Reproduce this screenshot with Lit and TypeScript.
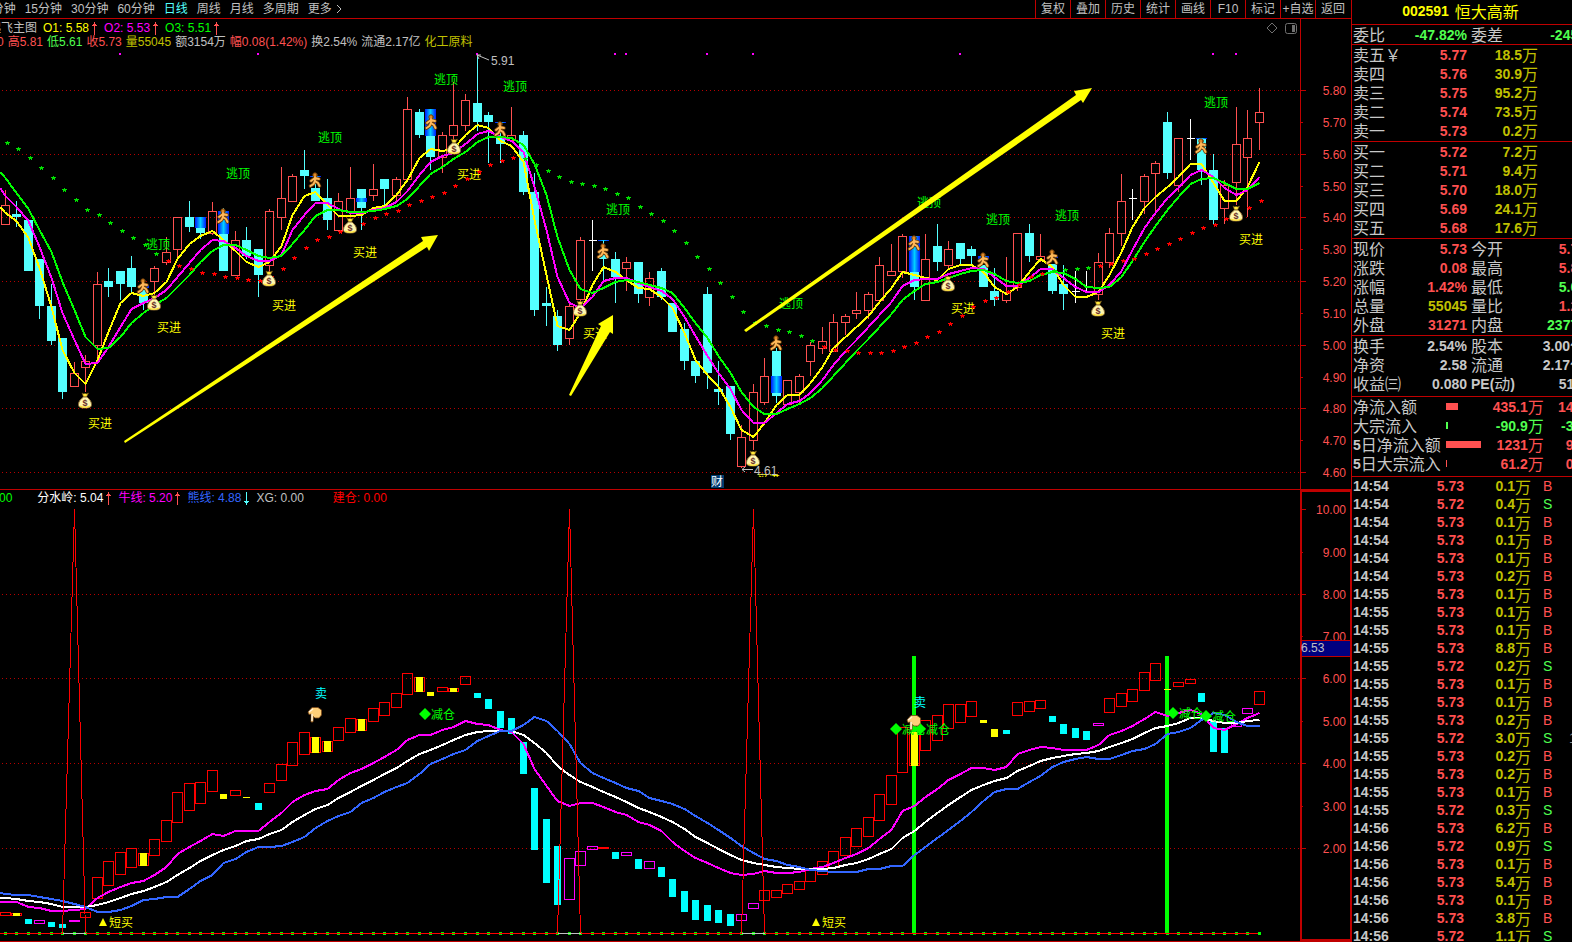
import { LitElement, html, svg, css } from "lit";
import { customElement, property } from "lit/decorators.js";
import { classMap } from "lit/directives/class-map.js";

// Horizontal centre of the bar with the given index.
const cx = (i: number) => Math.floor(5.3 + 11.505 * i) + 0.5;

// Candles: kind (R rising, C falling, W doji), high, body top, body bottom, low.
type Candle = [string, number, number, number, number];
const candles: Candle[] = [
  ["R",190,205,225,225],["C",201,214,217,227],["C",220,220,271,271],["C",259,259,306,319],["C",284,306,341,345],
  ["C",338,338,392,399],["R",362,373,387,387],["R",355,361,368,392],["R",272,284,346,358],["C",268,281,287,297],
  ["C",271,271,284,300],["C",256,268,287,292],["C",285,290,303,310],["R",266,268,282,295],["R",237,252,263,265],
  ["R",217,217,250,257],["C",201,217,227,232],["C",217,217,233,239],["R",202,211,234,235],["C",208,211,271,271],
  ["R",231,240,276,276],["C",227,240,256,259],["C",249,249,275,297],["R",209,211,266,275],["R",167,198,218,230],
  ["R",174,176,202,202],["C",150,170,176,189],["C",176,188,201,201],["C",179,198,220,230],["R",193,201,231,231],
  ["R",167,198,212,217],["C",189,189,208,230],["R",164,189,196,201],["C",179,179,189,205],["R",177,179,196,201],
  ["R",97,109,180,180],["C",109,112,135,138],["C",109,120,157,170],["R",132,135,158,173],["R",82,125,136,140],
  ["R",94,100,126,131],["C",54,103,122,131],["C",112,115,122,163],["C",122,136,144,163],["R",107,135,141,141],
  ["C",131,135,192,195],["C",173,192,310,316],["C",287,303,306,326],["C",310,316,345,351],["R",303,306,339,345],
  ["R",237,240,300,305],["W",220,240,241,271],["C",240,253,259,280],["C",252,259,277,303],["R",257,262,269,291],
  ["C",262,262,294,303],["R",272,278,298,306],["C",268,271,297,300],["C",303,303,332,332],["C",323,329,361,370],
  ["C",361,361,376,383],["C",287,294,373,389],["C",361,389,392,405],["C",386,386,434,440],["R",425,437,467,468],
  ["R",384,392,441,450],["R",358,376,403,405],["C",348,351,396,403],["R",380,380,405,405],["R",374,376,393,403],
  ["R",342,345,362,376],["R",327,341,349,354],["R",314,322,352,352],["R",314,316,323,335],["R",292,310,314,319],
  ["R",292,294,311,319],["R",257,265,301,301],["R",244,271,276,276],["R",234,236,272,278],["C",236,272,287,300],
  ["R",234,259,301,301],["C",224,246,262,271],["R",241,249,266,268],["C",243,243,259,264],["C",246,249,256,264],
  ["C",265,265,287,287],["C",268,291,300,306],["R",257,292,301,303],["R",233,233,288,291],["C",224,233,256,262],
  ["R",234,256,260,262],["C",264,264,291,294],["C",265,284,294,310],["W",271,291,292,303],["W",271,291,292,293],
  ["R",253,262,295,300],["R",228,233,263,268],["R",174,201,234,246],["W",189,198,199,220],["R",174,176,202,214],
  ["R",161,163,174,211],["C",112,122,173,179],["R",138,138,186,192],["W",119,138,139,160],["C",138,139,170,185],
  ["C",154,170,220,224],["R",180,185,209,224],["R",107,144,183,205],["R",110,138,158,217],["R",88,112,123,150],
];

const ma1 = [213,221,238,268,307,350,373,384,360,332,303,293,296,293,282,259,244,236,231,240,251,262,267,262,246,215,196,192,205,216,216,215,208,206,195,180,158,149,151,149,135,125,128,141,146,162,220,275,326,330,313,285,267,272,280,288,289,297,308,333,360,375,387,407,430,437,423,405,395,395,383,367,348,337,327,316,302,288,272,275,278,280,269,265,265,272,287,294,287,272,259,267,285,297,297,292,275,252,227,208,197,187,177,164,164,183,201,201,187,162];
const ma2 = [196,207,221,247,278,313,340,364,363,347,327,309,303,298,290,277,263,250,240,241,248,256,261,261,255,230,215,203,203,209,213,213,210,208,202,191,175,162,156,153,144,134,131,137,141,152,187,230,277,303,308,297,281,278,278,283,287,291,299,317,336,356,373,389,410,423,423,413,404,401,393,380,365,351,340,327,315,302,286,280,279,279,274,271,268,269,277,286,286,278,269,269,278,287,292,292,285,271,250,228,213,198,188,175,170,177,188,195,190,177];
const ma3 = [178,193,209,230,252,282,310,337,349,348,337,323,313,305,298,287,275,262,251,245,245,250,256,258,256,244,230,216,210,210,212,212,211,209,206,199,186,174,167,159,152,142,137,137,138,145,164,195,237,270,289,293,288,282,280,282,285,288,293,308,323,338,356,373,392,407,414,414,409,404,398,388,376,363,351,339,327,314,300,291,284,282,278,274,271,270,274,281,283,281,275,272,273,279,287,288,287,277,261,242,226,210,197,184,179,178,183,189,189,183];

// Stop levels, one per bar; the ranges listed in greenStops sit above the price.
const stops = [143,149,158,168,178,190,200,210,215,223,231,238,245,254,261,266,269,273,274,277,278,280,281,277,269,258,248,240,237,232,228,224,218,214,211,205,201,197,193,186,179,172,165,161,158,159,165,171,177,182,184,186,189,194,198,207,214,221,231,243,257,269,283,297,312,323,326,330,332,336,341,347,350,351,353,353,353,351,347,343,337,332,324,316,307,301,298,292,285,277,274,271,270,269,268,266,264,261,259,254,249,244,239,233,228,225,219,213,208,201];
const greenStops = [[0, 13], [45, 70], [91, 94]];
const isGreenStop = (i: number) => greenStops.some(([a, b]) => i >= a && i <= b);

// Bar index, top, bottom of the shaded signal zone.
const zones = [[12,285,288],[17,217,228],[19,211,234],[27,176,177],[31,198,202],[37,109,136],[43,122,123],[52,240,241],[67,376,393],[79,236,272],[85,256,259],[91,256,258],[104,138,139]];
const bags = [[85,401],[154,303],[269,279],[350,226],[454,147],[580,309],[753,459],[948,284],[1098,309],[1236,214]];
const runners = [[431,122],[315,180],[223,216],[143,286],[500,129],[603,251],[776,343],[914,243],[983,260],[1052,257],[1201,146]];
const buys = [[88,423],[157,327],[272,305],[353,252],[457,174],[583,333],[951,308],[1101,333],[1239,239]];
const exits = [[434,79],[318,137],[226,173],[146,244],[503,86],[606,209],[779,303],[917,202],[986,219],[1055,215],[1204,102]];
const dots = [120,258,477,615,626,707,753,960,1213,1236];
const arrows = [
  "124,441 423,241 421,237 438,235 429,251 427,247 125,443",
  "569,395 601,326 598,324 613,315 613,334 610,332 571,396",
  "744,330 1076,95 1074,91 1092,88 1083,103 1081,100 746,332",
];

// Indicator bars: kind (r/m outlined, c/y filled, Y filled inside an outline), top, bottom.
type Bar = [string, number, number];
const bars: Bar[] = [
  ["r",912,915],["Y",913,915],["c",919,924],["m",920,923],["c",922,927],["c",924,928],["m",920,921],["r",912,917],["r",877,898],["r",861,885],
  ["r",852,874],["r",848,867],["Y",853,865],["r",839,855],["r",820,841],["r",792,822],["r",783,810],["r",782,803],["r",770,791],["y",794,799],
  ["r",790,795],["y",797,798],["c",803,810],["r",783,792],["r",764,780],["r",742,765],["r",732,754],["Y",737,752],["Y",741,751],["r",727,740],
  ["r",718,732],["Y",719,730],["r",708,721],["r",702,715],["r",693,707],["r",673,694],["Y",677,691],["y",692,696],["r",687,691],["Y",688,691],
  ["r",676,684],["c",693,698],["c",699,709],["c",711,728],["c",718,734],["c",742,774],["c",788,850],["c",819,883],["c",846,905],["m",858,899],
  ["m",851,865],["m",846,849],["r",847,848],["c",852,859],["m",852,855],["c",859,869],["m",861,868],["c",867,877],["c",879,897],["c",891,912],
  ["c",900,920],["c",905,921],["c",910,923],["c",914,926],["m",914,920],["m",903,908],["r",890,900],["r",890,897],["r",884,893],["r",881,889],
  ["r",870,881],["r",861,874],["r",851,867],["r",837,855],["r",828,846],["r",817,836],["r",794,820],["r",775,804],["r",727,772],["Y",732,765],
  ["r",720,750],["r",715,740],["r",704,728],["r",704,722],["r",701,716],["y",720,723],["y",729,737],["c",730,734],["r",702,715],["r",701,711],
  ["r",700,708],["c",716,722],["c",724,734],["c",728,738],["c",731,740],["m",723,725],["r",698,712],["r",693,706],["r",689,701],["r",672,690],
  ["r",663,680],["y",689,690],["r",682,686],["r",679,683],["c",693,702],["c",721,752],["c",728,753],["m",723,726],["m",708,713],["r",691,704],
];
const bull = [902,902,907,908,911,911,910,909,898,892,887,883,881,875,867,854,847,841,834,836,831,831,831,822,813,802,795,791,789,780,773,769,763,757,750,740,735,735,730,727,721,724,725,730,732,744,769,786,801,806,803,803,807,812,815,822,825,831,842,851,858,863,868,873,875,874,871,873,873,872,869,867,863,858,854,848,839,830,811,806,797,789,780,774,768,768,770,767,754,750,747,748,750,750,750,745,735,731,726,719,712,716,713,710,714,728,730,724,718,713];
const ridge = [898,899,901,902,904,907,907,907,905,902,898,894,891,887,882,875,868,861,855,850,846,841,839,834,830,822,815,809,805,798,792,786,780,774,768,761,754,750,745,740,735,732,731,731,731,735,743,753,766,775,782,787,792,797,802,808,812,817,822,829,837,843,849,855,860,863,865,867,868,869,869,869,868,865,863,859,854,849,838,831,822,813,805,797,790,785,781,778,771,766,761,758,756,754,753,751,747,743,739,733,728,726,723,718,718,721,723,723,721,720];
const bear = [894,895,895,897,899,901,904,907,912,912,910,906,900,899,897,897,889,881,875,863,859,852,847,847,846,842,837,828,821,816,812,803,798,792,787,783,774,764,759,754,750,741,736,731,731,725,717,721,731,744,763,773,778,783,788,791,798,801,804,809,816,823,830,838,846,853,859,861,865,867,870,871,872,872,872,869,869,866,866,855,847,838,830,821,812,801,792,789,789,782,776,767,762,759,757,759,759,755,751,749,744,734,732,728,720,713,715,722,726,726];
const reduces = [[425,714],[896,729],[920,729],[1173,713],[1206,716]];

const path = (ys: number[], start: number) =>
  `0,${start} ` + ys.map((y, i) => `${cx(i)},${y}`).join(" ");

// Five-pixel asterisk whose left edge is x and whose crossbar is row y.
const star = (x: number, y: number) =>
  `M${x + 2} ${y - 0.5} h1 M${x} ${y + 0.5} h5 M${x + 1} ${y + 1.5} h3 M${x + 1} ${y + 2.5} h1 M${x + 3} ${y + 2.5} h1`;

// Splits a string so that digits are bold and hanzi keep the larger regular face.
const mix = (s: string) =>
  (s.match(/[\x20-\x7e]+|[^\x20-\x7e]+/g) ?? []).map((p) =>
    /[\x20-\x7e]/.test(p) ? html`<span class="n">${p}</span>` : p);

const bagIcon = (x: number, y: number) => svg`
  <g transform="translate(${x} ${y})">
    <path d="M-3 -8 L-1 -7 L0 -8 L1 -7 L3.500 -8 L1.500 -4 L-1.500 -4 Z" fill="#ffe838" stroke="#6b4a10" stroke-width=".6"/>
    <path d="M-1.500 -4 H2 C4 -2 6.500 0 6.500 3.500 C6.500 6.500 4 7 0 7 C-4 7 -6.500 6.500 -6.500 3.500 C-6.500 0 -4 -2 -1.500 -4 Z" fill="#fff6b0" stroke="#8a6a30" stroke-width="1"/>
    <path d="M-5 5 C-3 6.500 3 6.500 5 5" fill="none" stroke="#ffe23a" stroke-width="1.500"/>
    <text class="coin" x="0" y="5" text-anchor="middle">$</text>
  </g>`;

const runnerIcon = (x: number, y: number) => svg`
  <g transform="translate(${x} ${y})" stroke-linecap="round" stroke-linejoin="round" fill="none">
    <path d="M0 -3 V1 M0 -2 L-4 1 M0 -2 L4 -1 M0 1 L-1.500 4 L-4.500 6 M0 1 L3 3 L4.500 6" stroke="#6a3a08" stroke-width="3.600"/>
    <circle cx="0" cy="-5" r="2.200" fill="#e08a28" stroke="#6a3a08"/>
    <path d="M0 -3 V1 M0 -2 L-4 1 M0 -2 L4 -1 M0 1 L-1.500 4 L-4.500 6 M0 1 L3 3 L4.500 6" stroke="#ffb95a" stroke-width="1.900"/>
  </g>`;

const handIcon = (x: number, y: number) => svg`
  <g transform="translate(${x} ${y})">
    <path d="M0 5 L4 0.500 H10 L13.500 3 V8 L11 11 H7 L5.500 9.500 L5 15 H3 L3.200 7 L1 7.500 Z" fill="#ffcf78" stroke="#7a4818" stroke-width=".8"/>
    <path d="M1 5 L5 2 M4 7 V14" stroke="#fff4e0" stroke-width="1.400" fill="none"/>
  </g>`;

@customElement("trend-arrow")
class TrendArrow extends LitElement {
  @property({ type: Boolean }) down = false;
  static styles = css`
    :host { display: block; }
    svg { display: block; }
    .up { fill: none; stroke: #ff5050; }
    .down { fill: none; stroke: #54ffff; }
  `;
  render() {
    return html`<svg width="5" height="13" viewBox="0 0 5 13" shape-rendering="crispEdges">
      ${this.down
        ? svg`<path class="down" d="M2.500 0 V13 M0 9.500 H5 M1 10.500 H4"/>`
        : svg`<path class="up" d="M2.500 0 V13 M0 3.500 H5 M1 2.500 H4"/>`}
    </svg>`;
  }
}

const chartStyles = css`
  :host { display: grid; grid-template-columns: minmax(0, 1fr) 51px; font: 12px/14px "Liberation Sans", "Noto Sans CJK SC", sans-serif; }
  svg { display: block; width: 100%; }
  .plot { overflow: hidden; }
  .legend { display: flex; white-space: nowrap; }
  .item { display: flex; align-items: center; gap: 3px; }
  .crisp { shape-rendering: crispEdges; }
  .grid { stroke: #b80000; stroke-dasharray: 1 3; }
  .tick { stroke: #c00000; }
  .label { fill: #ff5050; text-anchor: end; }
  .line { fill: none; stroke-width: 2; }
  .yellow { color: #ffff00; } .magenta { color: #ff00ff; } .green { color: #00ff00; }
  .rise { color: #ff5050; } .fall { color: #50ff50; } .olive { color: #c0c000; }
  .grey { color: #c0c0c0; } .white { color: #ffffff; } .blue { color: #3366ff; } .red { color: #ff0000; }
`;

@customElement("price-chart")
class PriceChart extends LitElement {
  static styles = [chartStyles, css`
    :host { border-bottom: 1px solid #c00000; }
    .main { height: 438px; }
    .scale { height: 470px; }
    .top { display: flex; justify-content: space-between; height: 32px; padding-top: 2px; box-sizing: border-box; }
    .names { gap: 7px; margin-left: -11px; }
    .names .title { margin-right: -1px; }
    .facts { gap: 4px; margin-left: -3px; }
    .tools { display: flex; gap: 5px; align-items: center; height: 14px; padding-right: 2px; }
    .tools button { border: 0; padding: 0; background: none; width: 14px; height: 14px; }
    .tools svg { width: 14px; height: 14px; fill: none; stroke: #707070; }
    .up { fill: none; stroke: #ff5050; }
    .upwick { stroke: #ff5050; }
    .down { fill: #54ffff; }
    .downwick { stroke: #54ffff; }
    .doji { stroke: #fff; }
    .buy { fill: #ffff00; } .exit { fill: #00ff00; }
    .sg { stroke: #00e000; } .sr { stroke: #ff0000; }
    .mark { fill: #ff00ff; }
    .note { fill: #c0c0c0; } .noteline { fill: none; stroke: #c0c0c0; }
    .coin { font: bold 9px "Liberation Sans", sans-serif; fill: #6b3028; }
    .tag { fill: #003a70; } .tagtext { fill: #fff; }
  `];

  render() {
    const names = [["O1: 5.58", "yellow"], ["O2: 5.53", "magenta"], ["O3: 5.51", "green"]];
    const facts = [["0", "rise"], ["高5.81", "rise"], ["低5.61", "fall"], ["收5.73", "rise"], ["量55045", "olive"], ["额3154万", "grey"], ["幅0.08(1.42%)", "rise"], ["换2.54%", "grey"], ["流通2.17亿", "grey"], ["化工原料", "olive"]];
    const levels = [90,122,154,186,217,249,281,313,345,377,408,440,472];
    return html`
      <div class="plot">
        <div class="top">
          <div>
            <div class="legend names">
              <span class="title grey">起飞主图</span>
              ${names.map(([t, c]) => html`<span class="item ${c}">${t}<trend-arrow></trend-arrow></span>`)}
            </div>
            <div class="legend facts">${facts.map(([t, c]) => html`<span class=${c}>${t}</span>`)}</div>
          </div>
          <div class="tools">
            <button aria-label="标注"><svg viewBox="0 0 14 14"><path d="M7 2 L12 7 L7 12 L2 7 Z"/></svg></button>
            <button aria-label="侧栏"><svg viewBox="0 0 14 14"><rect x="1.500" y="2.500" width="11" height="10" rx="2"/><rect x="8" y="4" width="3" height="7" fill="#707070" stroke="none"/></svg></button>
          </div>
        </div>
        <svg class="main" viewBox="0 51 1300 438" preserveAspectRatio="xMaxYMin slice">
          <defs>
            <linearGradient id="zone"><stop offset="0" stop-color="#0018ff"/><stop offset=".2" stop-color="#0060ff"/><stop offset=".5" stop-color="#00d0ff"/><stop offset=".8" stop-color="#0060ff"/><stop offset="1" stop-color="#0018ff"/></linearGradient>
            <clipPath id="floor"><rect x="0" y="474" width="1300" height="3"/></clipPath>
          </defs>
          <g class="crisp">
            ${levels.filter((_, i) => i % 2 === 0).map((y) => svg`<path class="grid" d="M2 ${y + 0.5} H1300"/>`)}
            ${candles.map(([k, hi, top, bot, lo], i) => {
              const x = cx(i);
              if (k === "R") return svg`<path class="upwick" d="M${x} ${hi} V${top} M${x} ${bot} V${lo}"/><rect class="up" x=${x - 4} y=${top + 0.5} width="8" height=${bot - top - 1}/>`;
              if (k === "C") return svg`<path class="downwick" d="M${x} ${hi} V${lo}"/><rect class="down" x=${x - 4.5} y=${top} width="9" height=${bot - top}/>`;
              return svg`<path class="doji" d="M${x} ${hi} V${lo} M${x - 4} ${top + 0.5} H${x + 4}"/>`;
            })}
            ${zones.map(([i, a, b]) => svg`<rect fill="url(#zone)" x=${cx(i) - 5.5} y=${a} width="11" height=${b - a}/>`)}
          </g>
          ${exits.map(([x, y]) => svg`<text class="exit" x=${x} y=${y + 5}>逃顶</text>`)}
          ${buys.map(([x, y]) => svg`<text class="buy" x=${x} y=${y + 5}>买进</text>`)}
          <text class="buy" x="756" y="484" clip-path="url(#floor)">买进</text>
          <g class="crisp">
            <polyline class="line" stroke="#ffff00" points=${path(ma1, 207)} />
            <polyline class="line" stroke="#ff00ff" points=${path(ma2, 188)} />
            <polyline class="line" stroke="#00ff00" points=${path(ma3, 172)} />
            ${stops.map((y, i) => svg`<path class=${isGreenStop(i) ? "sg" : "sr"} d=${star(cx(i) - 0.5, y - 1)}/>`)}
            ${dots.map((x) => svg`<rect class="mark" x=${x - 1} y="53" width="2" height="2"/>`)}
          </g>
          ${runners.map(([x, y]) => runnerIcon(x, y))}
          ${bags.map(([x, y]) => bagIcon(x, y))}
          <path class="noteline" d="M477 55 L489 60 M477 55 l4 0 M477 55 l2 4"/>
          <text class="note" x="491" y="65">5.91</text>
          <path class="noteline" d="M742 469.500 H753 M745 467 L742 469.500 L745 472"/>
          <text class="note" x="754" y="475">4.61</text>
          <rect class="tag" x="711" y="475" width="13" height="13"/>
          <text class="tagtext" x="711" y="486">财</text>
          ${arrows.map((p) => svg`<polygon fill="#ffff00" points=${p}/>`)}
        </svg>
      </div>
      <svg class="scale" viewBox="1300 19 51 470" preserveAspectRatio="xMinYMin meet">
        <path class="tick crisp" d="M1300.500 19 V489"/>
        ${levels.map((y, i) => svg`
          <path class="tick crisp" d="M1301 ${y + 0.5} h${i % 2 ? 2 : 5}"/>
          <text class="label" x="1346" y=${y + 5}>${(5.8 - i / 10).toFixed(2)}</text>`)}
      </svg>`;
  }
}

@customElement("indicator-chart")
class IndicatorChart extends LitElement {
  static styles = [chartStyles, css`
    :host { border-bottom: 1px solid #c00000; }
    .main { height: 435px; }
    .scale { height: 451px; }
    .legend { height: 16px; gap: 7px; align-items: center; margin-left: -11px; }
    .first { margin-right: 18px; }
    .last { margin-left: 22px; }
    .r { fill: none; stroke: #ff0000; } .m { fill: none; stroke: #ff00ff; }
    .c { fill: #00ffff; } .y { fill: #ffff00; }
    .spike { fill: none; stroke: #ff0000; }
    .base { stroke: #c0c0c0; }
    .go { fill: #00ff00; } .sell { fill: #00ffff; } .short { fill: #ffff00; }
    .frame { fill: none; stroke: #c00000; stroke-width: 2; }
    .cursor { fill: #000080; stroke: #c00000; } .cursortext { fill: #c0c0c0; }
  `];

  render() {
    const levels = [509,552,594,636,678,721,763,806,848];
    return html`
      <div class="plot">
        <div class="legend">
          <span class="first green">0.00</span>
          <span class="item white">分水岭: 5.04<trend-arrow></trend-arrow></span>
          <span class="item magenta">牛线: 5.20<trend-arrow></trend-arrow></span>
          <span class="item blue">熊线: 4.88<trend-arrow down></trend-arrow></span>
          <span class="grey">XG: 0.00</span>
          <span class="last red">建仓: 0.00</span>
        </div>
        <svg class="main" viewBox="0 506 1300 435" preserveAspectRatio="xMaxYMin slice">
          <g class="crisp">
            ${[594, 678, 763, 848].map((y) => svg`<path class="grid" d="M2 ${y + 0.5} H1300"/>`)}
            ${bars.map((_, i) => svg`<rect class="go" x=${cx(i) - 1.5} y="932" width="3" height="3"/>`)}
            <path class="spike" d="M0 933.500 H1258"/>
            <rect class="go" x="912" y="656" width="4" height="277"/>
            <rect class="go" x="1165" y="656" width="4" height="277"/>
            ${bars.map(([k, a, b], i) => {
              const x = cx(i);
              const kind = k === "Y" ? "r" : k;
              const box = svg`<rect class=${kind} x=${x - 5} y=${a + 0.5} width="10" height=${b - a}/>`;
              const fill = svg`<rect class=${k === "Y" ? "y" : k} x=${x - 3.5} y=${a} width="7" height=${b - a + (k === "Y" ? 1 : 0)}/>`;
              if (k === "Y") return svg`${box}${fill}`;
              return k === "r" || k === "m" ? box : fill;
            })}
            <polyline class="line" stroke="#ff00ff" points=${path(bull, 902)} />
            <polyline class="line" stroke="#ffffff" points=${path(ridge, 898)} />
            <polyline class="line" stroke="#3366ff" points=${path(bear, 893)} />
            ${[6, 49, 65].map((i) => svg`
              <path class="spike" d="M${cx(i - 1)} 933 L${cx(i)} 509 L${cx(i + 1)} 933"/>
              <path class="base" d="M${cx(i - 1)} 933.500 H${cx(i + 1)}"/>`)}
          </g>
          <text class="sell" x="315" y="698">卖</text>
          <text class="sell" x="914" y="707">卖</text>
          ${reduces.map(([x, y]) => svg`
            <path class="go" d="M${x} ${y - 6} l6 6 l-6 6 l-6 -6 Z"/>
            <text class="go" x=${x + 6} y=${y + 5}>减仓</text>`)}
          ${handIcon(308, 707)}${handIcon(907, 715)}
          ${[103, 816].map((x) => svg`
            <path class="short" d="M${x} 918 l4 8 h-8 Z"/>
            <text class="short" x=${x + 6} y="927">短买</text>`)}
        </svg>
      </div>
      <svg class="scale" viewBox="1300 490 51 451" preserveAspectRatio="xMinYMin meet">
        <rect class="frame crisp" x="1301" y="491" width="50" height="449"/>
        ${levels.map((y, i) => svg`
          <path class="tick crisp" d="M1302 ${y + 0.5} h${i % 2 ? 1 : 4}"/>
          <text class="label" x="1346" y=${y + 5}>${(10 - i).toFixed(2)}</text>`)}
        <rect class="cursor crisp" x="1301.500" y="640.500" width="49" height="16"/>
        <text class="cursortext" x="1301" y="652">6.53</text>
      </svg>`;
  }
}

@customElement("quote-panel")
class QuotePanel extends LitElement {
  static styles = css`
    :host { display: block; overflow: hidden; border-left: 1px solid #c00000; font: 16px/19px "Noto Sans CJK SC", sans-serif; color: #c8c8c8; white-space: nowrap; }
    section { border-bottom: 1px solid #c00000; padding: 0 0 1px 1px; }
    .title, .ratio { padding-bottom: 0; }
    .loose { padding-bottom: 3px; }
    .n { font: bold 14px/0 "Liberation Sans", sans-serif; vertical-align: 1px; }
    h1 { margin: 0; display: flex; justify-content: center; gap: 6px; height: 24px; padding-right: 4px; font: 16px/22px "Noto Sans CJK SC", sans-serif; color: #ffff00; }
    h1 .n { line-height: 22px; }
    table { border-collapse: collapse; table-layout: fixed; width: 233px; }
    th, td { padding: 0; text-align: right; font-weight: normal; height: 19px; }
    th { text-align: left; }
    .rise { color: #ff5050; } .fall { color: #50ff50; } .olive { color: #c0c000; }
    .second { padding-left: 4px; }
    .w36 { width: 36px; } .w42 { width: 42px; } .w48 { width: 48px; } .w50 { width: 50px; } .w54 { width: 54px; } .w55 { width: 55px; }
    .w56 { width: 56px; } .w60 { width: 60px; } .w61 { width: 61px; } .w64 { width: 64px; } .w67 { width: 67px; } .w71 { width: 71px; } .w93 { width: 93px; }
    .bar { display: block; height: 7px; background: currentColor; }
    .ticks { margin-left: 1px; line-height: 18px; }
    .ticks td, .ticks th { height: 18px; }
    .ticks .n { vertical-align: 2px; }
    .ticks .side { text-align: left; padding-left: 12px; font: 14px/18px "Liberation Sans", sans-serif; }
    .ticks .more { text-align: left; color: #909090; padding-left: 2px; font: 14px/18px "Liberation Sans", sans-serif; }
  `;

  private book(side: string, rows: string[][]) {
    return html`<section><table>
      <colgroup><col class="w60" /><col class="w54" /><col class="w71" /><col class="w48" /></colgroup>
      ${rows.map(([n, p, q]) => html`<tr><th scope="row">${side}${n}</th><td class="rise">${mix(p)}</td><td class="olive">${mix(q)}</td></tr>`)}
    </table></section>`;
  }

  private facts(rows: string[][], cls: string) {
    return html`<section class=${cls}><table>
      <colgroup><col class="w50" /><col class="w64" /><col class="w54" /><col /></colgroup>
      ${rows.map(([a, av, ac, b, bv, bc]) => html`<tr><th scope="row">${a}</th><td class=${ac}>${mix(av)}</td><th scope="row" class="second">${mix(b)}</th><td class=${bc}>${mix(bv)}</td></tr>`)}
    </table></section>`;
  }

  render() {
    const money: [string, number, string, string, string][] = [
      ["净流入额", 12, "435.1万", "14%", "rise"], ["大宗流入", 2, "-90.9万", "-3%", "fall"],
      ["5日净流入额", 35, "1231万", "9%", "rise"], ["5日大宗流入", 1, "61.2万", "0%", "rise"],
    ];
    const ticks = "54 3 0.1,54 2 0.4,54 3 0.1,54 3 0.1,54 3 0.1,54 3 0.2,55 3 0.1,55 3 0.1,55 3 0.1,55 3 8.8,55 2 0.2,55 3 0.1,55 3 0.1,55 3 0.2,55 2 3.0,55 3 0.2,55 3 0.2,55 3 0.1,55 2 0.3,56 3 6.2,56 2 0.9,56 3 0.1,56 3 5.4,56 3 0.1,56 3 3.8,56 2 1.1"
      .split(",").map((t) => t.split(" "));
    return html`
      <section class="title"><h1><span class="n">002591</span><span>恒大高新</span></h1></section>
      ${this.facts([["委比", "-47.82%", "fall", "委差", "-2455", "fall"]], "ratio")}
      ${this.book("卖", [["五￥", "5.77", "18.5万"], ["四", "5.76", "30.9万"], ["三", "5.75", "95.2万"], ["二", "5.74", "73.5万"], ["一", "5.73", "0.2万"]])}
      ${this.book("买", [["一", "5.72", "7.2万"], ["二", "5.71", "9.4万"], ["三", "5.70", "18.0万"], ["四", "5.69", "24.1万"], ["五", "5.68", "17.6万"]])}
      ${this.facts([
        ["现价", "5.73", "rise", "今开", "5.70", "rise"], ["涨跌", "0.08", "rise", "最高", "5.81", "rise"],
        ["涨幅", "1.42%", "rise", "最低", "5.61", "fall"], ["总量", "55045", "olive", "量比", "1.20", "rise"],
        ["外盘", "31271", "rise", "内盘", "23774", "fall"],
      ], "")}
      ${this.facts([
        ["换手", "2.54%", "", "股本", "3.00亿", ""], ["净资", "2.58", "", "流通", "2.17亿", ""],
        ["收益㈢", "0.080", "", "PE(动)", "51.0", ""],
      ], "loose")}
      <section class="loose"><table>
        <colgroup><col class="w93" /><col class="w36" /><col class="w61" /><col class="w42" /></colgroup>
        ${money.map(([l, w, v, p, c]) => html`<tr><th scope="row">${mix(l)}</th><td class=${c}><span class="bar" style="width:${w}px"></span></td><td class=${c}>${mix(v)}</td><td class=${c}>${mix(p)}</td></tr>`)}
      </table></section>
      <table class="ticks">
        <colgroup><col class="w55" /><col class="w56" /><col class="w67" /><col class="w36" /><col /></colgroup>
        ${ticks.map(([m, p, v], i) => html`<tr>
          <th scope="row">${mix("14:" + m)}</th><td class="rise">${mix("5.7" + p)}</td><td class="olive">${mix(v + "万")}</td>
          <td class=${classMap({ side: true, rise: p === "3", fall: p === "2" })}>${p === "3" ? "B" : "S"}</td>
          <td class="more">${i === 14 ? "1" : ""}</td></tr>`)}
      </table>`;
  }
}

@customElement("app-root")
class AppRoot extends LitElement {
  static styles = css`
    :host { display: grid; grid-template-columns: minmax(0, 1fr) 221px; height: 100vh; overflow: hidden; background: #000; color: #c0c0c0; }
    nav { display: flex; justify-content: space-between; height: 18px; border-bottom: 1px solid #c00000; overflow: hidden; }
    button { border: 0; margin: 0; padding: 0; background: none; color: inherit; white-space: nowrap; font: 12px/16px "Liberation Sans", "Noto Sans CJK SC", sans-serif; }
    .periods { display: flex; gap: 9px; margin-left: -15px; }
    .actions { display: flex; padding-right: 1px; }
    .actions button { width: 35px; border-left: 1px solid #c00000; }
    button.on { color: #54ffff; }
    .chevron { width: 8px; height: 10px; margin-left: 3px; vertical-align: -1px; fill: none; stroke: #c0c0c0; }
    quote-panel { min-height: 0; }
  `;

  render() {
    const periods = ["5分钟", "15分钟", "30分钟", "60分钟", "日线", "周线", "月线", "多周期"];
    const actions = ["复权", "叠加", "历史", "统计", "画线", "F10", "标记", "+自选", "返回"];
    return html`
      <main>
        <nav>
          <div class="periods">
            ${periods.map((p) => html`<button class=${classMap({ on: p === "日线" })}>${p}</button>`)}
            <button>更多<svg class="chevron" viewBox="0 0 8 10"><path d="M2 1 L6 5 L2 9"/></svg></button>
          </div>
          <div class="actions">${actions.map((a) => html`<button>${a}</button>`)}</div>
        </nav>
        <price-chart></price-chart>
        <indicator-chart></indicator-chart>
      </main>
      <quote-panel></quote-panel>`;
  }
}
